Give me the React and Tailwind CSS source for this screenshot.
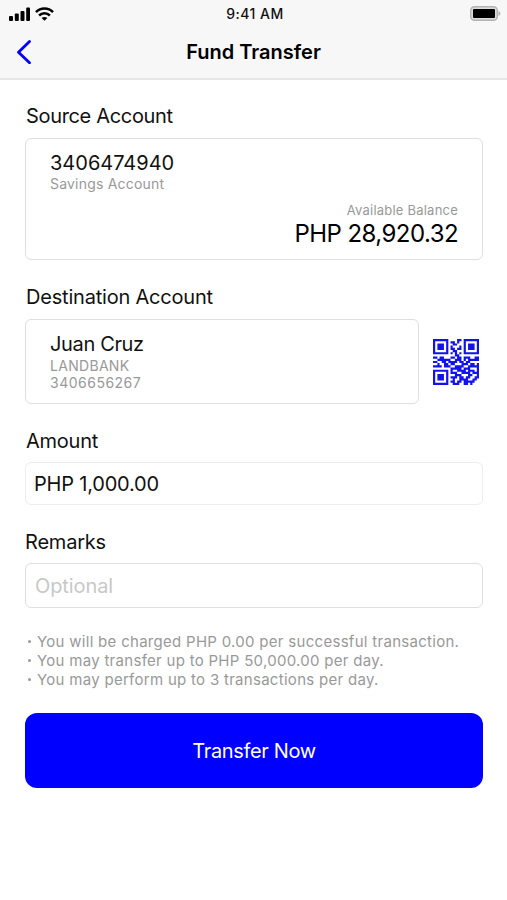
const qrRows = [
  "111111100001101111111",
  "100000101101001000001",
  "101110100110001011101",
  "101110101000101011101",
  "101110101101101011101",
  "100000100110001000001",
  "111111101010101111111",
  "000000000011000000000",
  "110110001101101110011",
  "001111110011101011111",
  "110011011110110110000",
  "001001101100011101101",
  "111101110011110011111",
  "000000001111101110001",
  "111111101001111011101",
  "100000101110011110111",
  "101110100011100011001",
  "101110101110110110011",
  "101110100100111100110",
  "100000101101101111100",
  "111111100111001101000",
];

const qrPath = qrRows
  .flatMap((row, y) => [...row].map((cell, x) => (cell === "1" ? `M${x} ${y}h1v1h-1z` : "")))
  .join("");

const notes = [
  "You will be charged PHP 0.00 per successful transaction.",
  "You may transfer up to PHP 50,000.00 per day.",
  "You may perform up to 3 transactions per day.",
];

function StatusBar() {
  return (
    <div className="grid h-[27px] grid-cols-3 items-center pr-[6px] pl-[9px]">
      <div className="flex items-center gap-[5px]">
        <svg width="21" height="14" viewBox="0 0 21 14">
          <rect x="0" y="9" width="4" height="5" rx="1" />
          <rect x="5.8" y="6.5" width="4" height="7.5" rx="1" />
          <rect x="11.5" y="4" width="4" height="10" rx="1" />
          <rect x="17.2" y="0.5" width="3.8" height="13.5" rx="1" />
        </svg>
        <svg width="19" height="14" viewBox="0 0 19 14" fill="none" stroke="#000" strokeWidth="2.5">
          <path d="M1 5.2C5.7 0.3 13.3 0.3 18 5.2" />
          <path d="M4.1 8.5c3-3 7.8-3 10.8 0" />
          <path d="M9.5 13.8L6.6 11.1c1.6-1.5 4.2-1.5 5.8 0z" fill="#000" stroke="none" />
        </svg>
      </div>
      <p className="text-center text-[14px] leading-5 font-medium tracking-[0.5px] whitespace-nowrap">9:41 AM</p>
      <svg className="justify-self-end" width="31" height="15" viewBox="0 0 31 15">
        <rect x="0.7" y="0.7" width="26.6" height="13.6" rx="3.8" fill="#dcdcdc" stroke="#b3b3b3" strokeWidth="1.4" />
        <rect x="3" y="3" width="22" height="9" rx="1" />
        <path d="M28.5 5c2.5.8 2.5 4.2 0 5z" fill="#b3b3b3" />
      </svg>
    </div>
  );
}

function Label({ children, className = "" }) {
  return <h2 className={`text-[20px] leading-6 ${className}`}>{children}</h2>;
}

export default function App() {
  return (
    <main className="h-[900px] w-[507px] overflow-hidden bg-white font-['Inter',sans-serif] text-[#111]">
      <header className="h-[80px] border-b-2 border-[#e6e6e6] bg-[#f7f7f7]">
        <StatusBar />
        <div className="grid h-[50px] grid-cols-[40px_1fr_40px] items-center">
          <button type="button" aria-label="Back" className="pl-[16px]">
            <svg width="16" height="24" viewBox="0 0 16 24" fill="none" stroke="#00f" strokeWidth="2.8">
              <path d="M13.5 1.5L2.5 12.2 13.5 22.7" strokeLinecap="round" strokeLinejoin="round" />
            </svg>
          </button>
          <h1 className="text-center text-[20px] font-semibold text-black">Fund Transfer</h1>
        </div>
      </header>

      <div className="flex flex-col pr-[24px] pl-[25px]">
        <Label className="mt-6 ml-px tracking-[-0.33px]">Source Account</Label>
        <section className="mt-[10px] flex h-[122px] flex-col rounded-md border border-[#dfdfdf] px-6 pt-[11px]">
          <p className="text-[20px] leading-[26px]">3406474940</p>
          <p className="-mt-px text-[14px] leading-[17px] tracking-[0.2px] text-[#999]">Savings Account</p>
          <p className="mt-[10px] text-right text-[13px] leading-[17px] tracking-[0.22px] text-[#999]">
            Available Balance
          </p>
          <p className="text-right text-[24px] leading-[29px] tracking-[-0.55px] text-black">PHP 28,920.32</p>
        </section>

        <Label className="mt-[25px] ml-px tracking-[-0.2px]">Destination Account</Label>
        <div className="mt-[10px] flex items-center">
          <section className="h-[85px] w-[394px] rounded-md border border-[#dfdfdf] px-6 pt-[11px]">
            <p className="text-[20px] leading-[26px] tracking-[-0.35px]">Juan Cruz</p>
            <p className="text-[14px] leading-[17px] tracking-[0.3px] text-[#999]">LANDBANK</p>
            <p className="text-[14px] leading-[17px] tracking-[0.5px] text-[#999]">3406656267</p>
          </section>
          <svg className="ml-[14px]" width="46" height="46" viewBox="0 0 21 21">
            <path d={qrPath} fill="#1212f0" />
          </svg>
        </div>

        <Label className="mt-[25px] ml-px tracking-[-0.25px]">Amount</Label>
        <div className="mt-[9px] flex h-[43px] items-center rounded-md border border-[#ededed] px-2 text-[20px]">
          <span className="tracking-[-0.2px]">PHP 1,000.00</span>
        </div>

        <Label className="mt-[25px] tracking-[-0.2px]">Remarks</Label>
        <div className="mt-[9px] flex h-[45px] items-center rounded-md border border-[#dfdfdf] px-[9px] text-[20px] text-[#c8c8c8]">
          <span className="tracking-[-0.1px]">Optional</span>
        </div>

        <ul className="mt-6 text-[15px] leading-[19px] tracking-[0.29px] text-[#999]">
          {notes.map((note) => (
            <li key={note} className="flex items-center whitespace-nowrap">
              <span className="mr-[6px] ml-[3px] size-[3px] rounded-full bg-[#999]" />
              <span>{note}</span>
            </li>
          ))}
        </ul>

        <button
          type="button"
          className="mt-6 h-[75px] rounded-xl bg-[#0000ff] text-[20px] tracking-[-0.35px] text-white"
        >
          Transfer Now
        </button>
      </div>
    </main>
  );
}
